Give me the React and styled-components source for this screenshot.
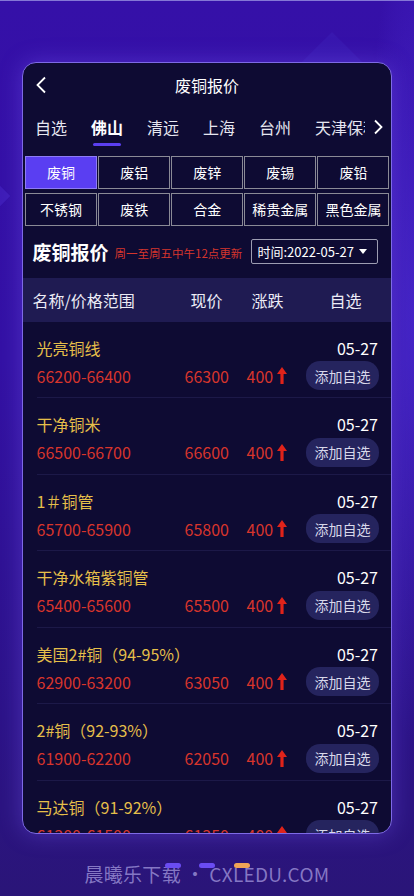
import React from "react";
import styled, { createGlobalStyle } from "styled-components";

const Global = createGlobalStyle`
  html, body { margin: 0; padding: 0; }
  body {
    width: 414px; height: 896px; overflow: hidden;
    font-family: "Noto Sans CJK SC", "Noto Sans", sans-serif;
    background: #3410a5;
  }
  * { box-sizing: border-box; }
`;

const Page = styled.div`
  position: relative;
  width: 414px;
  height: 896px;
  overflow: hidden;
  border-top: 1px solid #8577d6;
  background:
    radial-gradient(ellipse 50px 420px at 414px 320px, rgba(90, 60, 240, 0.45), transparent),
    linear-gradient(180deg, #3510a8 0%, #3311a4 40%, #2c1388 80%, #2a1578 100%);
  padding: 61px 22px 0 22px;
`;

const Diamond = styled.div`
  position: absolute;
  left: ${p => p.$x}px;
  top: ${p => p.$y}px;
  width: ${p => p.$s}px;
  height: ${p => p.$s}px;
  transform: rotate(45deg);
  background: ${p => p.$c};
`;

const Card = styled.div`
  position: relative;
  height: 772px;
  border: 1.5px solid #7e6ae6;
  border-radius: 14px;
  background: #0e0b33;
  overflow: hidden;
  box-shadow: 0 0 22px rgba(130, 100, 255, 0.35);
`;

const Header = styled.div`
  position: relative;
  height: 44px;
  display: flex;
  align-items: center;
  justify-content: center;
  color: #fff;
  font-size: 16px;
`;

const Back = styled.div`
  position: absolute;
  left: 12px;
  top: 13px;
  display: flex;
`;

const Tabs = styled.div`
  height: 44px;
  display: flex;
  align-items: flex-start;
  padding-left: 12px;
  position: relative;
`;

const TabScroll = styled.div`
  display: flex;
  gap: 24px;
  width: 330px;
  overflow: hidden;
  white-space: nowrap;
`;

const Tab = styled.div`
  display: flex;
  flex-direction: column;
  align-items: center;
  flex-shrink: 0;
  padding-top: 8px;
  font-size: 16px;
  line-height: 24px;
  color: ${p => (p.$active ? "#ffffff" : "#e6e6f0")};
  font-weight: ${p => (p.$active ? 700 : 400)};
`;

const Underline = styled.div`
  margin-top: 4px;
  width: 28px;
  height: 3px;
  border-radius: 2px;
  background: ${p => (p.$show ? "#5b3ff0" : "transparent")};
`;

const More = styled.div`
  position: absolute;
  right: 7px;
  top: 12px;
  display: flex;
`;

const Grid = styled.div`
  margin: 4.5px 1.5px 0 2px;
  display: grid;
  grid-template-columns: repeat(5, 1fr);
  column-gap: 1px;
  row-gap: 4px;
`;

const Cell = styled.div`
  height: 33px;
  display: flex;
  align-items: center;
  justify-content: center;
  font-size: 14px;
  color: #fff;
  white-space: nowrap;
  border: 1.5px solid ${p => (p.$active ? "#8e7cf5" : "#8a8a96")};
  background: ${p => (p.$active ? "#5a3ef2" : "transparent")};
`;

const SectionBar = styled.div`
  height: 52px;
  display: flex;
  align-items: center;
  padding: 0 13.5px 0 9.5px;
`;

const SectionTitle = styled.div`
  font-size: 19px;
  font-weight: 700;
  color: #fff;
`;

const SectionNote = styled.div`
  font-size: 11.5px;
  color: #d5352d;
  margin-left: 6px;
  margin-top: 3px;
`;

const DateSelect = styled.div`
  margin-left: auto;
  width: 127px;
  height: 25px;
  border: 1px solid #9d9db2;
  border-radius: 2px;
  display: flex;
  align-items: center;
  padding-left: 6px;
  gap: 5px;
  font-size: 13px;
  color: #fff;
`;

const Caret = styled.span`
  width: 0;
  height: 0;
  border-left: 4px solid transparent;
  border-right: 4px solid transparent;
  border-top: 5px solid #fff;
`;

const TableHead = styled.div`
  height: 44px;
  background: #1f1b52;
  display: grid;
  grid-template-columns: 151px 46px 76px 80px;
  align-items: center;
  padding: 0 0 0 9.5px;
  font-size: 16px;
  color: #ececf6;
`;

const HeadCell = styled.div`
  text-align: ${p => p.$align || "left"};
  white-space: nowrap;
`;

const Row = styled.div`
  position: relative;
  display: grid;
  grid-template-columns: 148px 62px 1fr auto;
  grid-template-rows: 24px 30px;
  row-gap: 1px;
  align-items: center;
  padding: 14px 12px 7.5px 13.5px;
  &::after {
    content: "";
    position: absolute;
    left: 14px;
    right: 0;
    bottom: 0;
    height: 1px;
    background: #1c1948;
  }
`;

const Name = styled.div`
  grid-column: 1 / 4;
  font-size: 16px;
  color: #e5bf4a;
  white-space: nowrap;
`;

const DateText = styled.div`
  font-size: 16px;
  color: #fff;
  text-align: right;
  padding-right: 1px;
`;

const Red = styled.div`
  font-size: 16px;
  color: #d8352c;
  display: flex;
  align-items: center;
  gap: 4px;
`;

const AddBtn = styled.div`
  width: 73px;
  height: 29px;
  border-radius: 14px;
  background: #25245e;
  color: #d8d8ea;
  font-size: 14px;
  display: flex;
  align-items: center;
  justify-content: center;
`;

const Watermark = styled.div`
  position: relative;
  margin-top: 26px;
  text-align: center;
  font-size: 19px;
  letter-spacing: 0.3px;
  color: rgba(150, 138, 210, 0.85);
  font-family: "Noto Sans CJK SC", "Noto Sans", sans-serif;
`;

const Pill = styled.span`
  position: absolute;
  top: 3px;
  left: ${p => p.$x}px;
  width: 16px;
  height: 5px;
  border-radius: 3px;
  background: ${p => p.$c};
`;

const UpArrow = () => (
  <svg width="10" height="17" viewBox="0 0 10 17">
    <path d="M5 0 L10 7 H6.6 V17 H3.4 V7 H0 Z" fill="#e0231a" />
  </svg>
);

const tabs = ["自选", "佛山", "清远", "上海", "台州", "天津保税区"];
const cats = ["废铜", "废铝", "废锌", "废锡", "废铅", "不锈钢", "废铁", "合金", "稀贵金属", "黑色金属"];
const rows = [
  ["光亮铜线", "66200-66400", "66300"],
  ["干净铜米", "66500-66700", "66600"],
  ["1＃铜管", "65700-65900", "65800"],
  ["干净水箱紫铜管", "65400-65600", "65500"],
  ["美国2#铜（94-95%）", "62900-63200", "63050"],
  ["2#铜（92-93%）", "61900-62200", "62050"],
  ["马达铜（91-92%）", "61300-61500", "61350"],
];

export default function App() {
  return (
    <>
      <Global />
      <Page>
        <Diamond $x={310} $y={40} $s={44} $c="rgba(70, 50, 200, 0.22)" />
        <Diamond $x={-26} $y={180} $s={30} $c="rgba(90, 60, 230, 0.28)" />
        <Card>
          <Header>
            <Back>
              <svg width="14" height="18" viewBox="0 0 14 18">
                <path d="M10 1.5 L2.5 9 L10 16.5" fill="none" stroke="#fff" strokeWidth="1.8" />
              </svg>
            </Back>
            废铜报价
          </Header>
          <Tabs>
            <TabScroll>
              {tabs.map((t, i) => (
                <Tab key={t} $active={i === 1}>
                  {t}
                  <Underline $show={i === 1} />
                </Tab>
              ))}
            </TabScroll>
            <More>
              <svg width="12" height="16" viewBox="0 0 12 16">
                <path d="M3 1.5 L9.5 8 L3 14.5" fill="none" stroke="#fff" strokeWidth="1.8" />
              </svg>
            </More>
          </Tabs>
          <Grid>
            {cats.map((c, i) => (
              <Cell key={c} $active={i === 0}>{c}</Cell>
            ))}
          </Grid>
          <SectionBar>
            <SectionTitle>废铜报价</SectionTitle>
            <SectionNote>周一至周五中午12点更新</SectionNote>
            <DateSelect>
              时间:2022-05-27
              <Caret />
            </DateSelect>
          </SectionBar>
          <TableHead>
            <HeadCell>名称/价格范围</HeadCell>
            <HeadCell $align="center">现价</HeadCell>
            <HeadCell $align="center">涨跌</HeadCell>
            <HeadCell $align="center">自选</HeadCell>
          </TableHead>
          {rows.map(([n, range, price]) => (
            <Row key={n}>
              <Name>{n}</Name>
              <DateText>05-27</DateText>
              <Red>{range}</Red>
              <Red>{price}</Red>
              <Red>400<UpArrow /></Red>
              <AddBtn>添加自选</AddBtn>
            </Row>
          ))}
        </Card>
        <Watermark>
          晨曦乐下载 • CXLEDU.COM
          <Pill $x={143} $c="#6a4cf2" />
          <Pill $x={177} $c="#6a4cf2" />
          <Pill $x={212} $c="#f0a456" />
        </Watermark>
      </Page>
    </>
  );
}
